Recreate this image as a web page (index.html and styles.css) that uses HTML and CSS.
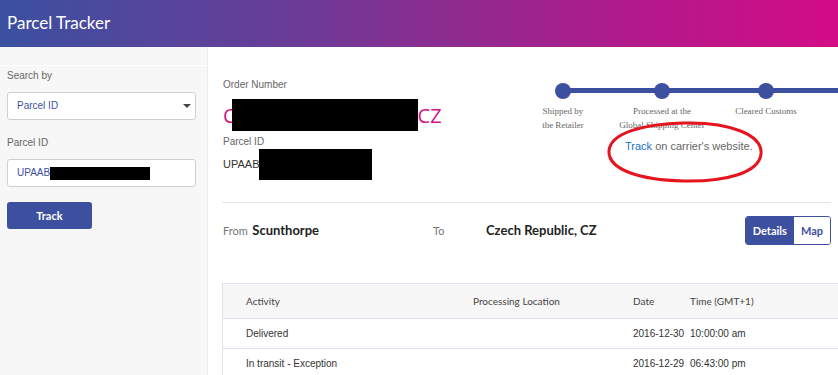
FILE: index.html
```html
<!DOCTYPE html>
<html lang="en">
<head>
    <meta charset="UTF-8">
    <meta name="viewport" content="width=device-width, initial-scale=1.0">
    <title>Parcel Tracker</title>
    <link rel="stylesheet" href="styles.css">
</head>
<body>
    <header class="topbar">
        <h1>Parcel Tracker</h1>
    </header>

    <div class="layout">
        <!-- search panel -->
        <aside class="sidebar">
            <div class="sidebar-top"></div>
            <label class="field-label">Search by</label>
            <div class="select-box">
                <span>Parcel ID</span>
            </div>
            <label class="field-label second">Parcel ID</label>
            <div class="text-box">
                <span>UPAAB</span><span class="redact redact-input"></span>
            </div>
            <button class="track-button">Track</button>
        </aside>

        <!-- parcel details -->
        <main class="main">
            <div class="summary">
                <div class="order-info">
                    <div class="info-label">Order Number</div>
                    <div class="order-number">C<span class="redact redact-order"></span>CZ</div>
                    <div class="info-label small">Parcel ID</div>
                    <div class="parcel-id">UPAAB<span class="redact redact-parcel"></span></div>
                </div>

                <div class="progress">
                    <div class="progress-line"></div>
                    <div class="steps">
                        <div class="step">
                            <span class="dot"></span>
                            <p>Shipped by<br>the Retailer</p>
                        </div>
                        <div class="step">
                            <span class="dot"></span>
                            <p>Processed at the<br>Global Shipping Center</p>
                        </div>
                        <div class="step">
                            <span class="dot"></span>
                            <p>Cleared Customs</p>
                        </div>
                    </div>
                    <div class="carrier-link"><a href="#">Track</a> on carrier's website.</div>
                    <svg class="circle-mark" width="160" height="68" viewBox="0 0 160 68">
                        <path d="M80 5 C125 4 158 17 156 36 C154 55 120 64 78 63 C36 62 3 52 4 33 C5 15 38 6 80 5 Z" fill="none" stroke="#e5141e" stroke-width="3"/>
                    </svg>
                </div>
            </div>

            <div class="route">
                <div class="route-from"><span class="route-label">From</span> <strong>Scunthorpe</strong></div>
                <div class="route-to"><span class="route-label">To</span></div>
                <div class="route-dest"><strong>Czech Republic, CZ</strong></div>
                <div class="view-toggle">
                    <button class="active">Details</button>
                    <button>Map</button>
                </div>
            </div>

            <table class="events">
                <thead>
                    <tr>
                        <th class="col-activity">Activity</th>
                        <th class="col-location">Processing Location</th>
                        <th class="col-date">Date</th>
                        <th>Time (GMT+1)</th>
                    </tr>
                </thead>
                <tbody>
                    <tr>
                        <td class="col-activity">Delivered</td>
                        <td></td>
                        <td>2016-12-30</td>
                        <td>10:00:00 am</td>
                    </tr>
                    <tr>
                        <td class="col-activity">In transit - Exception</td>
                        <td></td>
                        <td>2016-12-29</td>
                        <td>06:43:00 pm</td>
                    </tr>
                </tbody>
            </table>
        </main>
    </div>
</body>
</html>
```

FILE: styles.css
```css
html, body {
    margin: 0;
    padding: 0;
    overflow: hidden;
}
body {
    font-family: "Liberation Sans", Arial, sans-serif;
    background-color: #ffffff;
    color: #333;
}
.topbar {
    height: 47px;
    background: linear-gradient(90deg, #3b50a0 0%, #6a3c98 35%, #8b2d90 52%, #b11a8c 75%, #d30c87 100%);
}
.topbar h1 {
    margin: 0;
    padding-left: 7px;
    font-family: Lato, "Open Sans", sans-serif;
    font-weight: 400;
    font-size: 17px;
    line-height: 46px;
    color: #fff;
}
.layout {
    display: flex;
    height: 328px;
}

/* sidebar */
.sidebar {
    width: 189px;
    flex-shrink: 0;
    padding: 0 11px 0 7px;
    background-color: #f7f7f7;
    border-right: 1px solid #ededed;
}
.sidebar-top {
    height: 18px;
    margin: 0 -11px 0 -7px;
    border-bottom: 1px solid #ffffff;
}
.field-label {
    display: block;
    margin: 3px 0 9px;
    font-size: 10px;
    line-height: 14px;
    color: #666;
}
.field-label.second {
    margin-top: 16px;
}
.select-box, .text-box {
    position: relative;
    height: 26px;
    padding-left: 9px;
    background: #fff;
    border: 1px solid #cfcfcf;
    border-radius: 3px;
    font-size: 10px;
    line-height: 26px;
    color: #3d4f9f;
}
.select-box::after {
    content: "";
    position: absolute;
    right: 4px;
    top: 11px;
    border-left: 4px solid transparent;
    border-right: 4px solid transparent;
    border-top: 4px solid #444;
}
.text-box {
    display: flex;
    align-items: center;
}
.redact {
    display: inline-block;
    background: #000;
    vertical-align: middle;
}
.redact-input {
    width: 100px;
    height: 13px;
}
.track-button {
    display: block;
    margin-top: 15px;
    width: 85px;
    height: 27px;
    padding: 0;
    background-color: #3d4f9f;
    color: #fff;
    border: none;
    border-radius: 3px;
    font-family: Lato, "Open Sans", sans-serif;
    font-weight: 700;
    font-size: 11px;
    cursor: pointer;
}

/* main panel */
.main {
    flex: 1;
    padding: 0 7px 0 14px;
    overflow: hidden;
}
.summary {
    display: flex;
    height: 155px;
    border-bottom: 1px solid #e6e6e6;
}
.order-info {
    width: 300px;
    padding: 31px 0 0 1px;
}
.info-label {
    font-size: 10px;
    line-height: 14px;
    color: #666;
}
.info-label.small {
    margin-top: 3px;
}
.order-number {
    display: flex;
    align-items: center;
    height: 34px;
    margin-top: 6px;
    font-family: "Open Sans", sans-serif;
    font-size: 20px;
    color: #d0148a;
}
.redact-order {
    width: 186px;
    height: 32px;
    margin-left: -4px;
}
.parcel-id {
    display: flex;
    align-items: center;
    height: 32px;
    margin-top: -1px;
    font-size: 11px;
    color: #333;
}
.redact-parcel {
    width: 113px;
    height: 31px;
}

/* progress */
.progress {
    position: relative;
    flex: 1;
    margin-right: -20px;
}
.progress-line {
    position: absolute;
    left: 40px;
    right: 0;
    top: 41px;
    height: 5px;
    background: #3d4f9f;
}
.steps {
    display: flex;
    padding: 36px 0 0 5px;
}
.step {
    position: relative;
    text-align: center;
}
.step:nth-child(1) { width: 70px; }
.step:nth-child(2) { width: 128px; }
.step:nth-child(3) { width: 80px; }
.dot {
    display: block;
    width: 16px;
    height: 16px;
    margin: 0 auto;
    border-radius: 50%;
    background: #3d4f9f;
}
.step p {
    margin: 5px -20px 0;
    font-family: "Liberation Serif", "Times New Roman", serif;
    font-size: 9px;
    line-height: 14px;
    color: #666;
}
.carrier-link {
    margin: 8px 0 0 102px;
    font-size: 11px;
    color: #666;
}
.carrier-link a {
    color: #1a72c4;
    text-decoration: none;
}
.circle-mark {
    position: absolute;
    left: 82px;
    top: 71px;
}

/* route */
.route {
    display: flex;
    align-items: center;
    height: 54px;
    padding-left: 1px;
}
.route-label {
    font-family: Lato, "Open Sans", sans-serif;
    font-size: 11px;
    color: #777;
}
.route strong {
    font-family: Lato, "Open Sans", sans-serif;
    font-weight: 700;
    font-size: 13px;
    color: #222;
}
.route-from {
    width: 210px;
}
.route-to {
    width: 53px;
}
.view-toggle {
    display: flex;
    margin-left: auto;
    border: 1px solid #3d4f9f;
    border-radius: 3px;
    overflow: hidden;
}
.view-toggle button {
    height: 27px;
    padding: 0 7px;
    background: #fff;
    color: #3d4f9f;
    border: none;
    font-family: Lato, "Open Sans", sans-serif;
    font-weight: 700;
    font-size: 11px;
    cursor: pointer;
}
.view-toggle button.active {
    background: #3d4f9f;
    color: #fff;
}

/* events table */
.events {
    width: calc(100% + 30px);
    margin-top: 26px;
    border-collapse: collapse;
    table-layout: fixed;
}
.events th, .events td {
    padding: 0;
    text-align: left;
    border-top: 1px solid #dfe3f0;
    border-bottom: 1px solid #dfe3f0;
}
.events th {
    height: 34px;
    background: #f7f7f7;
    font-family: Lato, "Open Sans", sans-serif;
    font-weight: 400;
    font-size: 10px;
    color: #444;
}
.events td {
    height: 29px;
    font-size: 10px;
    color: #333;
}
.events .col-activity {
    width: 227px;
    padding-left: 23px;
    border-left: 1px solid #dfe3f0;
}
.events .col-location {
    width: 160px;
}
.events .col-date {
    width: 57px;
}
```
